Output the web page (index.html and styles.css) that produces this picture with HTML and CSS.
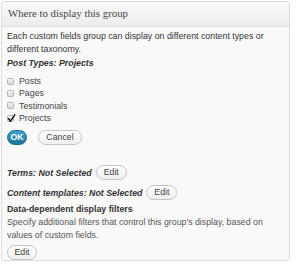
FILE: index.html
```html
<!DOCTYPE html>
<html lang="en">
<head>
  <meta charset="UTF-8" />
  <title>Where to display this group</title>
  <link rel="stylesheet" href="styles.css">
</head>
<body>
  <div class="postbox">
    <h3 class="hndle">Where to display this group</h3>
    <div class="inside">
      <p class="intro">Each custom fields group can display on different content types or different taxonomy.</p>

      <p class="label"><i>Post Types: Projects</i></p>
      <ul class="types">
        <li><span class="check"></span>Posts</li>
        <li><span class="check"></span>Pages</li>
        <li><span class="check"></span>Testimonials</li>
        <li>
          <span class="check checked">
            <svg width="9" height="9" viewBox="0 0 9 9"><path d="M1.6 4.6 L3.4 7.2 L7.8 0.8" fill="none" stroke="#111" stroke-width="1.5" stroke-linecap="round" stroke-linejoin="round"/></svg>
          </span>Projects
        </li>
      </ul>
      <div class="actions">
        <button class="button-primary">OK</button>
        <button class="button">Cancel</button>
      </div>

      <div class="row first">
        <i class="label">Terms: Not Selected</i>
        <button class="button">Edit</button>
      </div>
      <div class="row">
        <i class="label">Content templates: Not Selected</i>
        <button class="button">Edit</button>
      </div>

      <p class="filters-title">Data-dependent display filters</p>
      <p class="filters-desc">Specify additional filters that control this group's display, based on values of custom fields.</p>
      <button class="button">Edit</button>
    </div>
  </div>
</body>
</html>
```

FILE: styles.css
```css
* {
  box-sizing: border-box;
}

body {
  margin: 1px 0 0 1px;
  background: #fff;
  font-family: 'Liberation Sans', Arial, sans-serif;
  font-size: 8.8px;
  color: #333;
}

.postbox {
  width: 289px;
  height: 260px;
  border: 1px solid #dcdcdc;
  border-radius: 3px;
  background: #f9f9f9;
}

.hndle {
  margin: 0;
  height: 25px;
  padding: 0 6px;
  line-height: 22px;
  font-family: 'Liberation Serif', Georgia, serif;
  font-size: 10.8px;
  font-weight: normal;
  color: #464646;
  background: linear-gradient(#f9f9f9, #ededed);
  border-bottom: 1px solid #dcdcdc;
  border-radius: 3px 3px 0 0;
}

.inside {
  padding: 3px 5px 0;
}

.intro {
  margin: 0;
  line-height: 13px;
}

.label {
  font-weight: bold;
  color: #333;
}

p.label {
  margin: 1px 0 5px;
  line-height: 13px;
}

.types {
  list-style: none;
  margin: 0;
  padding: 0;
}

.types li {
  display: flex;
  align-items: center;
  height: 12.3px;
  color: #444;
}

.check {
  position: relative;
  width: 7px;
  height: 7px;
  margin-right: 5px;
  border: 1px solid #b4b4b4;
  border-radius: 1.5px;
  background: linear-gradient(#f4f4f4, #dadada);
}

.check svg {
  position: absolute;
  left: -1px;
  top: -2px;
}

.checked {
  background: #fafafa;
}

.actions {
  display: flex;
  gap: 11px;
  margin-top: 6px;
}

.button,
.button-primary {
  font-family: 'Liberation Sans', Arial, sans-serif;
  font-size: 8.8px;
  height: 15px;
  padding: 0 7px;
  border-radius: 8px;
  line-height: 13px;
  cursor: pointer;
}

.button {
  background: linear-gradient(#fefefe, #efefef);
  border: 1px solid #c4c4c4;
  color: #444;
}

.button-primary {
  width: 20px;
  padding: 0;
  background: linear-gradient(#3aa3d3, #21759b);
  border: 1px solid #1e6a8d;
  color: #fff;
  font-weight: bold;
}

.actions .button {
  width: 44px;
  padding: 0;
}

.row {
  display: flex;
  align-items: center;
  gap: 4px;
  margin-top: 5px;
}

.row.first {
  margin-top: 20px;
}

.row .button {
  width: 31px;
  padding: 0;
}

.filters-title {
  margin: 3px 0 0;
  font-weight: bold;
  line-height: 13px;
}

.filters-desc {
  margin: 0 0 3px;
  line-height: 13px;
  color: #555;
}

.filters-desc + .button {
  width: 30px;
  padding: 0;
}
```
